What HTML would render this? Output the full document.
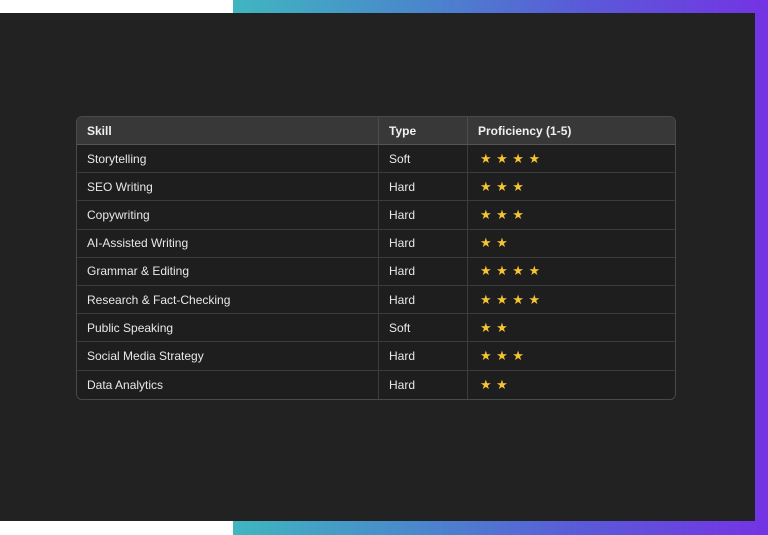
<!DOCTYPE html>
<html><head><style>
*{margin:0;padding:0;box-sizing:border-box}
body{width:768px;height:535px;background:#fff;position:relative;overflow:hidden;font-family:"Liberation Sans",sans-serif}
.g{position:absolute;left:233px;top:0;width:535px;height:535px;background:linear-gradient(90deg,#3fb6c0 0%,#4a87cc 35%,#5a5ad8 65%,#7433e4 100%)}
.p{position:absolute;left:0;top:13px;width:755px;height:508px;background:#222}
table{position:absolute;left:76px;top:116px;width:600px;border-collapse:separate;border-spacing:0;border:1px solid #4a4a4a;border-radius:6px;overflow:hidden;font-size:12px;color:#e8e8e8}
td,th{height:28.2px;padding:0 0 0 10px;text-align:left;border-bottom:1px solid #3c3c3c;border-right:1px solid #3c3c3c;background:#1e1e1e}
th{background:#383838;font-weight:bold;color:#f0f0f0;height:28px;border-bottom:1px solid #555;border-right:1px solid #4c4c4c}
tr td:last-child,tr th:last-child{border-right:none}
tr:last-child td{border-bottom:none}
.s{color:#f5c431;font-size:13px;letter-spacing:4.5px;padding-left:12px}
</style></head><body>
<div class="g"></div><div class="p"></div>
<table>
<tr><th style="width:302px">Skill</th><th style="width:89px">Type</th><th>Proficiency (1-5)</th></tr>
<tr><td>Storytelling</td><td>Soft</td><td class="s">★★★★</td></tr>
<tr><td>SEO Writing</td><td>Hard</td><td class="s">★★★</td></tr>
<tr><td>Copywriting</td><td>Hard</td><td class="s">★★★</td></tr>
<tr><td>AI-Assisted Writing</td><td>Hard</td><td class="s">★★</td></tr>
<tr><td>Grammar &amp; Editing</td><td>Hard</td><td class="s">★★★★</td></tr>
<tr><td>Research &amp; Fact-Checking</td><td>Hard</td><td class="s">★★★★</td></tr>
<tr><td>Public Speaking</td><td>Soft</td><td class="s">★★</td></tr>
<tr><td>Social Media Strategy</td><td>Hard</td><td class="s">★★★</td></tr>
<tr><td>Data Analytics</td><td>Hard</td><td class="s">★★</td></tr>
</table>
</body></html>
